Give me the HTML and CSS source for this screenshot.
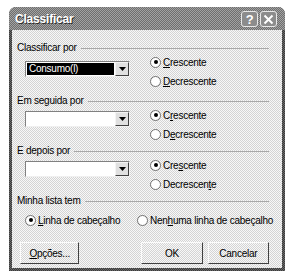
FILE: index.html
```
<!DOCTYPE html>
<html lang="pt">
<head>
    <meta charset="UTF-8">
    <title>Classificar</title>
    <link rel="stylesheet" href="styles.css">
</head>
<body>
    <div class="window">
        <div class="titlebar">
            <span class="title">Classificar</span>
            <span class="tb-btn help">?</span>
            <span class="tb-btn close">
                <svg width="11" height="11" viewBox="0 0 11 11"><path d="M1.5 1.5 L9.5 9.5 M9.5 1.5 L1.5 9.5" stroke="#fff" stroke-width="2"/></svg>
            </span>
        </div>

        <div class="client">
            <div class="group first">
                <div class="group-head"><span>Classificar por</span><i class="rule"></i></div>
                <div class="group-body">
                    <div class="combo">
                        <span class="combo-value"><span class="sel">Consumo(l)</span></span>
                        <span class="combo-btn"><svg width="7" height="4" viewBox="0 0 7 4"><polygon points="0,0 7,0 3.5,4" fill="#000"/></svg></span>
                    </div>
                    <div class="radios">
                        <div class="radio on"><i></i><span><u>C</u>rescente</span></div>
                        <div class="radio"><i></i><span><u>D</u>ecrescente</span></div>
                    </div>
                </div>
            </div>

            <div class="group">
                <div class="group-head"><span>Em seguida por</span><i class="rule"></i></div>
                <div class="group-body">
                    <div class="combo">
                        <span class="combo-value"></span>
                        <span class="combo-btn"><svg width="7" height="4" viewBox="0 0 7 4"><polygon points="0,0 7,0 3.5,4" fill="#000"/></svg></span>
                    </div>
                    <div class="radios">
                        <div class="radio on"><i></i><span>C<u>r</u>escente</span></div>
                        <div class="radio"><i></i><span>D<u>e</u>crescente</span></div>
                    </div>
                </div>
            </div>

            <div class="group">
                <div class="group-head"><span>E depois por</span><i class="rule"></i></div>
                <div class="group-body">
                    <div class="combo">
                        <span class="combo-value"></span>
                        <span class="combo-btn"><svg width="7" height="4" viewBox="0 0 7 4"><polygon points="0,0 7,0 3.5,4" fill="#000"/></svg></span>
                    </div>
                    <div class="radios">
                        <div class="radio on"><i></i><span>Cre<u>s</u>cente</span></div>
                        <div class="radio"><i></i><span>Decrescen<u>t</u>e</span></div>
                    </div>
                </div>
            </div>

            <div class="group-head last"><span>Minha lista tem</span><i class="rule"></i></div>
            <div class="header-row">
                <div class="radio on"><i></i><span><u>L</u>inha de cabeçalho</span></div>
                <div class="radio"><i></i><span>Nen<u>h</u>uma linha de cabeçalho</span></div>
            </div>

            <div class="buttons">
                <button class="btn options"><u>O</u>pções...</button>
                <button class="btn">OK</button>
                <button class="btn">Cancelar</button>
            </div>
        </div>
    </div>
</body>
</html>
```

FILE: styles.css
```
body {
    margin: 0;
    background: #fff;
    font-family: "Liberation Sans", Arial, sans-serif;
    font-size: 10px;
    letter-spacing: -0.25px;
    color: #000;
}

.window {
    margin: 7px 0 0 9px;
    width: 276px;
    height: 264px;
    box-sizing: border-box;
    padding: 0 3px 3px 3px;
    border-radius: 7px 7px 0 0;
    background: #505050 repeating-conic-gradient(#3a3a3a 0 25%, #6a6a6a 0 50%) 0 0 / 2px 2px;
    display: flex;
    flex-direction: column;
}

.titlebar {
    height: 23px;
    display: flex;
    align-items: center;
    margin: 0 -3px;
    padding-left: 6px;
    padding-right: 8px;
    border-radius: 7px 7px 0 0;
    background: #888 repeating-conic-gradient(#6e6e6e 0 25%, #a2a2a2 0 50%) 0 0 / 2px 2px;
}

.title {
    flex: 1;
    color: #fff;
    font-weight: bold;
    font-size: 12px;
    letter-spacing: -0.2px;
    text-shadow: 1px 1px 0 #303030;
    margin-top: 1px;
}

.tb-btn {
    width: 17px;
    height: 16px;
    box-sizing: border-box;
    border: 1px solid #e8e8e8;
    border-radius: 3px;
    background: #8c8c8c;
    display: flex;
    align-items: center;
    justify-content: center;
    color: #fff;
    font-weight: bold;
    font-size: 13px;
    margin-top: 1px;
}

.tb-btn.help {
    margin-right: 2px;
}

.client {
    flex: 1;
    padding: 12px 13px 0 5px;
    background: #e6e6e6 repeating-conic-gradient(#f8f8f8 0 25%, #d4d4d4 0 50%) 0 0 / 2px 2px;
}

.group {
    margin-bottom: 3px;
}

.group.first {
    margin-bottom: 6px;
}

.group-head {
    height: 12px;
    display: flex;
    align-items: center;
    line-height: 12px;
    white-space: nowrap;
}

.rule {
    flex: 1;
    margin-left: 4px;
    border-top: 1px solid #a8a8a8;
}

.group-body {
    display: flex;
    padding-left: 8px;
}

.combo {
    width: 105px;
    height: 16px;
    box-sizing: border-box;
    margin-top: 4px;
    border: 1px solid;
    border-color: #808080 #f0f0f0 #f0f0f0 #808080;
    background: #fff;
    display: flex;
}

.group.first .combo {
    margin-top: 7px;
}

.combo-value {
    flex: 1;
    padding: 1px;
    display: flex;
}

.sel {
    flex: 1;
    background: #000;
    color: #fff;
    line-height: 12px;
    padding-left: 2px;
}

.combo-btn {
    width: 14px;
    box-sizing: border-box;
    border: 1px solid;
    border-color: #f4f4f4 #404040 #404040 #f4f4f4;
    background: #e0e0e0;
    display: flex;
    align-items: center;
    justify-content: center;
}

.radios {
    margin-left: 20px;
    display: flex;
    flex-direction: column;
    gap: 3px;
}

.radio {
    height: 16px;
    display: flex;
    align-items: center;
    white-space: nowrap;
}

.radio i {
    flex: none;
    width: 11px;
    height: 11px;
    box-sizing: border-box;
    border: 1px solid #707070;
    border-radius: 50%;
    background: #fff;
    margin-right: 2px;
    display: flex;
    align-items: center;
    justify-content: center;
}

.radio.on i::after {
    content: "";
    width: 4px;
    height: 4px;
    border-radius: 50%;
    background: #000;
}

.group-head.last {
    margin-top: 2px;
}

.header-row {
    display: flex;
    margin-top: 5px;
    padding-left: 8px;
}

.header-row .radio:first-child {
    width: 112px;
    flex: none;
}

.buttons {
    display: flex;
    margin-top: 14px;
    padding-left: 3px;
}

.btn {
    width: 64px;
    height: 22px;
    box-sizing: border-box;
    border: 1px solid;
    border-color: #fcfcfc #404040 #404040 #fcfcfc;
    background: #e6e6e6 repeating-conic-gradient(#f8f8f8 0 25%, #d4d4d4 0 50%) 0 0 / 2px 2px;
    font-family: "Liberation Sans", Arial, sans-serif;
    font-size: 10px;
    letter-spacing: -0.25px;
    color: #000;
    padding: 0;
    margin-left: 5px;
}

.btn.options {
    width: 62px;
    margin-left: 0;
    margin-right: 57px;
}
```
